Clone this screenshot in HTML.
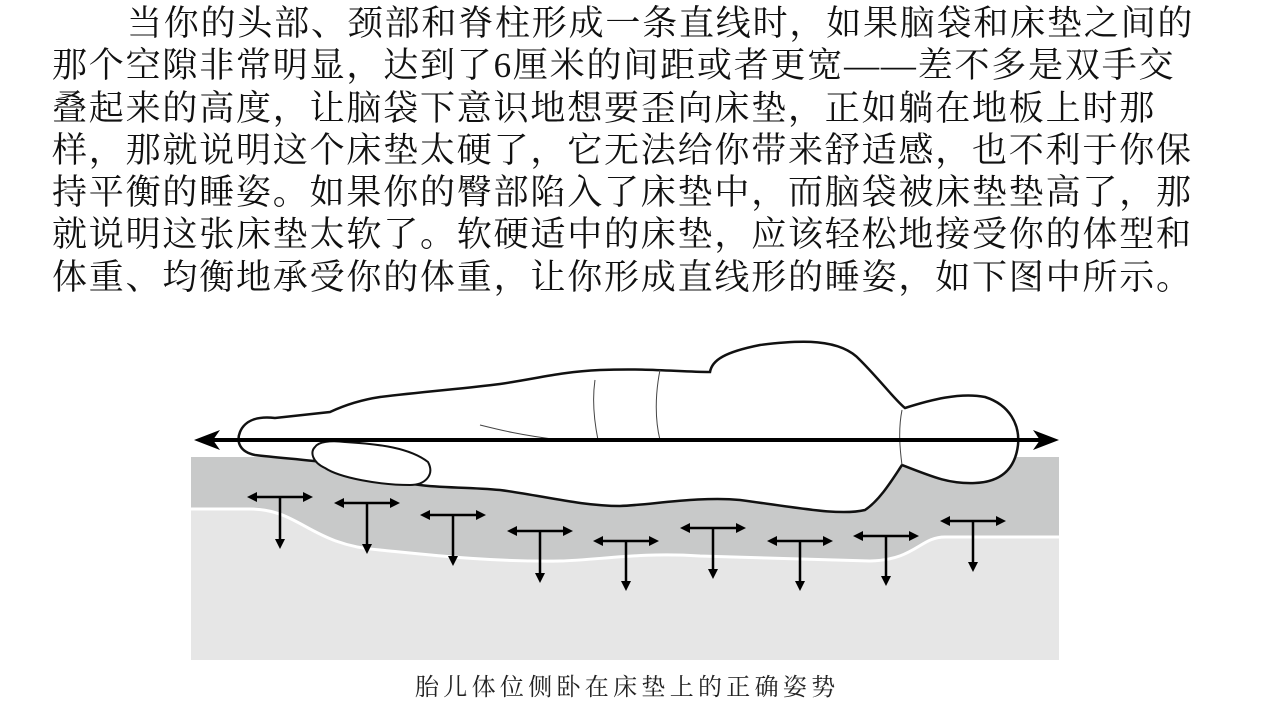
<!DOCTYPE html>
<html><head><meta charset="utf-8"><style>
body{margin:0;width:1262px;height:724px;background:#fff;overflow:hidden;position:relative}
.t{position:absolute;left:52px;top:3px;font-family:"Liberation Serif","Noto Serif CJK SC",serif;font-size:35px;letter-spacing:1.8px;line-height:42.3px;color:#111;white-space:nowrap}
.cap{position:absolute;left:415px;top:667px;font-family:"Liberation Serif","Noto Serif CJK SC",serif;font-size:24px;letter-spacing:4.3px;color:#222;white-space:nowrap}
svg{position:absolute;left:0;top:0}
</style></head><body>
<div class="t"><span style="padding-left:75px">当你的头部、颈部和脊柱形成一条直线时，如果脑袋和床垫之间的</span><br>那个空隙非常明显，达到了6厘米的间距或者更宽——差不多是双手交<br>叠起来的高度，让脑袋下意识地想要歪向床垫，正如躺在地板上时那<br>样，那就说明这个床垫太硬了，它无法给你带来舒适感，也不利于你保<br>持平衡的睡姿。如果你的臀部陷入了床垫中，而脑袋被床垫垫高了，那<br>就说明这张床垫太软了。软硬适中的床垫，应该轻松地接受你的体型和<br>体重、均衡地承受你的体重，让你形成直线形的睡姿，如下图中所示。</div>
<svg width="1262" height="724" viewBox="0 0 1262 724">
<rect x="191" y="457" width="868" height="203" fill="#e6e6e6"/>
<path d="M191 457 H1059 V537 H945 C920 537 915 560 870 561 L700 556 C640 552 600 560 560 561 C490 562 430 555 380 550 C310 545 300 509 250 509 H191 Z" fill="#c8c9c9"/>
<path d="M191 509 H250 C300 509 310 545 380 550 C430 555 490 562 560 561 C600 560 640 552 700 556 L870 561 C915 560 920 537 945 537 H1059" fill="none" stroke="#fff" stroke-width="3"/>
<path d="M240 432 C245 420 258 416 275 418 L330 412 C345 405 360 400 380 397 C420 392 470 388 500 384 C540 378 560 372 600 370 C650 368 680 372 710 372 C712 360 725 352 760 345 C800 340 840 338 860 360 C880 380 895 400 905 408 C930 400 960 392 985 397 C1010 405 1020 425 1018 445 C1015 470 1000 482 975 483 C950 484 935 478 902 465 C892 480 880 500 865 510 C840 516 800 508 740 500 C700 496 650 505 620 506 C580 506 540 495 500 490 C470 487 440 488 420 485 C390 482 350 470 330 463 C310 460 280 458 255 455 C240 452 236 442 240 432 Z" fill="#fff" stroke="#111" stroke-width="2.5"/>
<path d="M315 447 C318 442 330 440 345 442 C380 444 410 448 428 462 C435 475 425 485 410 485 C380 485 340 478 325 468 C312 462 310 452 315 447 Z" fill="#fff" stroke="#111" stroke-width="2"/>
<path d="M595 380 C592 400 594 420 598 440 M902 410 C898 430 900 450 902 465 M480 425 C500 430 520 435 560 440 M660 370 C655 395 655 420 660 440" fill="none" stroke="#444" stroke-width="1"/>
<line x1="210" y1="440" x2="1042" y2="440" stroke="#000" stroke-width="4"/>
<path d="M194 440 L220 430 L213 440 L220 450 Z M1059 440 L1033 430 L1040 440 L1033 450 Z" fill="#000"/>
<path stroke="#000" stroke-width="2.5" fill="none" d="M254 497 H306 M280 497 V540 M367 503 V545 M341 503 H393 M453 515 V557 M427 515 H479 M540 531 V574 M514 531 H566 M626 541 V582 M600 541 H652 M713 528 V570 M687 528 H739 M800 541 V582 M774 541 H826 M886 536 V577 M860 536 H912 M973 521 V563 M947 521 H999"/>
<g fill="#000">
<path d="M247 497 l10 -5 v10z M313 497 l-10 -5 v10z M280 549 l-5 -10 h10z"/>
<path d="M334 503 l10 -5 v10z M400 503 l-10 -5 v10z M367 554 l-5 -10 h10z"/>
<path d="M420 515 l10 -5 v10z M486 515 l-10 -5 v10z M453 566 l-5 -10 h10z"/>
<path d="M507 531 l10 -5 v10z M573 531 l-10 -5 v10z M540 583 l-5 -10 h10z"/>
<path d="M593 541 l10 -5 v10z M659 541 l-10 -5 v10z M626 591 l-5 -10 h10z"/>
<path d="M680 528 l10 -5 v10z M746 528 l-10 -5 v10z M713 579 l-5 -10 h10z"/>
<path d="M767 541 l10 -5 v10z M833 541 l-10 -5 v10z M800 591 l-5 -10 h10z"/>
<path d="M853 536 l10 -5 v10z M919 536 l-10 -5 v10z M886 586 l-5 -10 h10z"/>
<path d="M940 521 l10 -5 v10z M1006 521 l-10 -5 v10z M973 572 l-5 -10 h10z"/>
</g>
</svg>
<div class="cap">胎儿体位侧卧在床垫上的正确姿势</div>
</body></html>
